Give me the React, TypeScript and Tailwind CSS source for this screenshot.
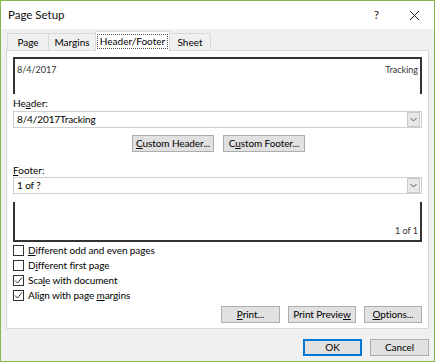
import React from "react";

const font = { fontFamily: 'Lato, "Noto Sans", "Liberation Sans", sans-serif' };

const Btn: React.FC<{ children: React.ReactNode; w: string; primary?: boolean }> = ({ children, w, primary }) => (
  <div
    className={`${w} h-[17px] flex items-center justify-center bg-[#e1e1e1] text-[10px] tracking-[-0.1px] text-black ${
      primary ? "border-2 border-[#0078d7]" : "border border-[#adadad]"
    }`}
  >
    <span>{children}</span>
  </div>
);

const Select: React.FC<{ value: string }> = ({ value }) => (
  <div className="h-[17px] flex items-center border border-[#cfcfcf] bg-white">
    <span className="flex-1 pl-[3px] text-[10px] tracking-[-0.1px] text-black">{value}</span>
    <div className="w-[13px] h-[15px] mr-[1px] bg-[#e8e8e8] border border-[#c9c9c9] flex items-center justify-center">
      <svg width="7" height="5" viewBox="0 0 7 5">
        <path d="M0.5 1 L3.5 4 L6.5 1" fill="none" stroke="#555" strokeWidth="1" />
      </svg>
    </div>
  </div>
);

const Check: React.FC<{ checked?: boolean; children: React.ReactNode }> = ({ checked, children }) => (
  <div className="h-[15px] flex items-center gap-[4px]">
    <div className="w-[11px] h-[11px] border border-[#333] bg-white flex items-center justify-center">
      {checked && (
        <svg width="9" height="9" viewBox="0 0 9 9">
          <path d="M1 4.5 L3.5 7 L8 1.5" fill="none" stroke="#333" strokeWidth="1" />
        </svg>
      )}
    </div>
    <span className="text-[10px] tracking-[-0.1px] text-black">{children}</span>
  </div>
);

const tabs = [
  { t: "Page", w: "w-[42px]" },
  { t: "Margins", w: "w-[48px]" },
  { t: "Header/Footer", w: "w-[75px]" },
  { t: "Sheet", w: "w-[42px]" },
];

export default function App() {
  return (
    <div style={font} className="w-[435px] h-[362px] border border-[#84b84c] bg-[#f0f0f0] flex flex-col">
      <div className="h-[28px] bg-white flex items-center justify-between pl-[7px] pr-[14px]">
        <span className="text-[11.5px] text-[#111]">Page Setup</span>
        <div className="flex items-center gap-[30px] text-[#222]">
          <span className="text-[12px]">?</span>
          <svg width="11" height="11" viewBox="0 0 11 11">
            <path d="M1 1 L10 10 M10 1 L1 10" stroke="#222" strokeWidth="1" />
          </svg>
        </div>
      </div>

      <div className="flex items-end pl-[7px] h-[21px]">
        {tabs.map(({ t, w }) => {
          const sel = t === "Header/Footer";
          return (
            <div
              key={t}
              className={`${w} flex items-center justify-center text-[10px] text-black border border-[#d9d9d9] border-b-0 -ml-[1px] ${
                sel ? "h-[20px] bg-white -mb-[1px] relative" : "h-[17px] bg-[#f0f0f0]"
              }`}
            >
              {sel ? <span className="border border-dotted border-[#555] px-[2px] leading-[13px]">{t}</span> : t}
            </div>
          );
        })}
      </div>

      <div className="mx-[5px] h-[279px] bg-white border border-[#d9d9d9] flex flex-col px-[6px] pt-[6px]">
        <div className="h-[37px] border-t-2 border-l-2 border-r-2 border-[#333] flex justify-between px-[2px] pt-[4px] text-[9px] text-[#333]">
          <span>8/4/2017</span>
          <span>Tracking</span>
        </div>
        <div className="mt-[2px] text-[10px] text-black h-[14px] leading-[14px]">
          He<u>a</u>der:
        </div>
        <div className="mt-[1px]">
          <Select value="8/4/2017Tracking" />
        </div>
        <div className="flex justify-center gap-[9px] mt-[7px] pl-[2px]">
          <Btn w="w-[82px]">
            <u>C</u>ustom Header...
          </Btn>
          <Btn w="w-[82px]">
            C<u>u</u>stom Footer...
          </Btn>
        </div>
        <div className="mt-[11px] text-[10px] text-black h-[14px] leading-[14px]">
          <u>F</u>ooter:
        </div>
        <div>
          <Select value="1 of ?" />
        </div>
        <div className="mt-[8px] h-[40px] border-l-2 border-b-2 border-r-2 border-[#333] flex items-end justify-end px-[2px] pb-[3px] text-[9px] text-[#333]">
          <span>1 of 1</span>
        </div>
        <div className="mt-[1px] flex flex-col">
          <Check>
            <u>D</u>ifferent odd and even pages
          </Check>
          <Check>
            D<u>i</u>fferent first page
          </Check>
          <Check checked>
            Sca<u>l</u>e with document
          </Check>
          <Check checked>
            Align with page <u>m</u>argins
          </Check>
        </div>
        <div className="flex justify-end gap-[8px] mt-[3px]">
          <Btn w="w-[59px]">
            <u>P</u>rint...
          </Btn>
          <Btn w="w-[68px]">
            Print Previe<u>w</u>
          </Btn>
          <Btn w="w-[58px]">
            <u>O</u>ptions...
          </Btn>
        </div>
      </div>

      <div className="flex justify-end gap-[8px] pr-[5px] mt-[10px]">
        <Btn w="w-[59px]" primary>
          OK
        </Btn>
        <Btn w="w-[59px]">Cancel</Btn>
      </div>
    </div>
  );
}
